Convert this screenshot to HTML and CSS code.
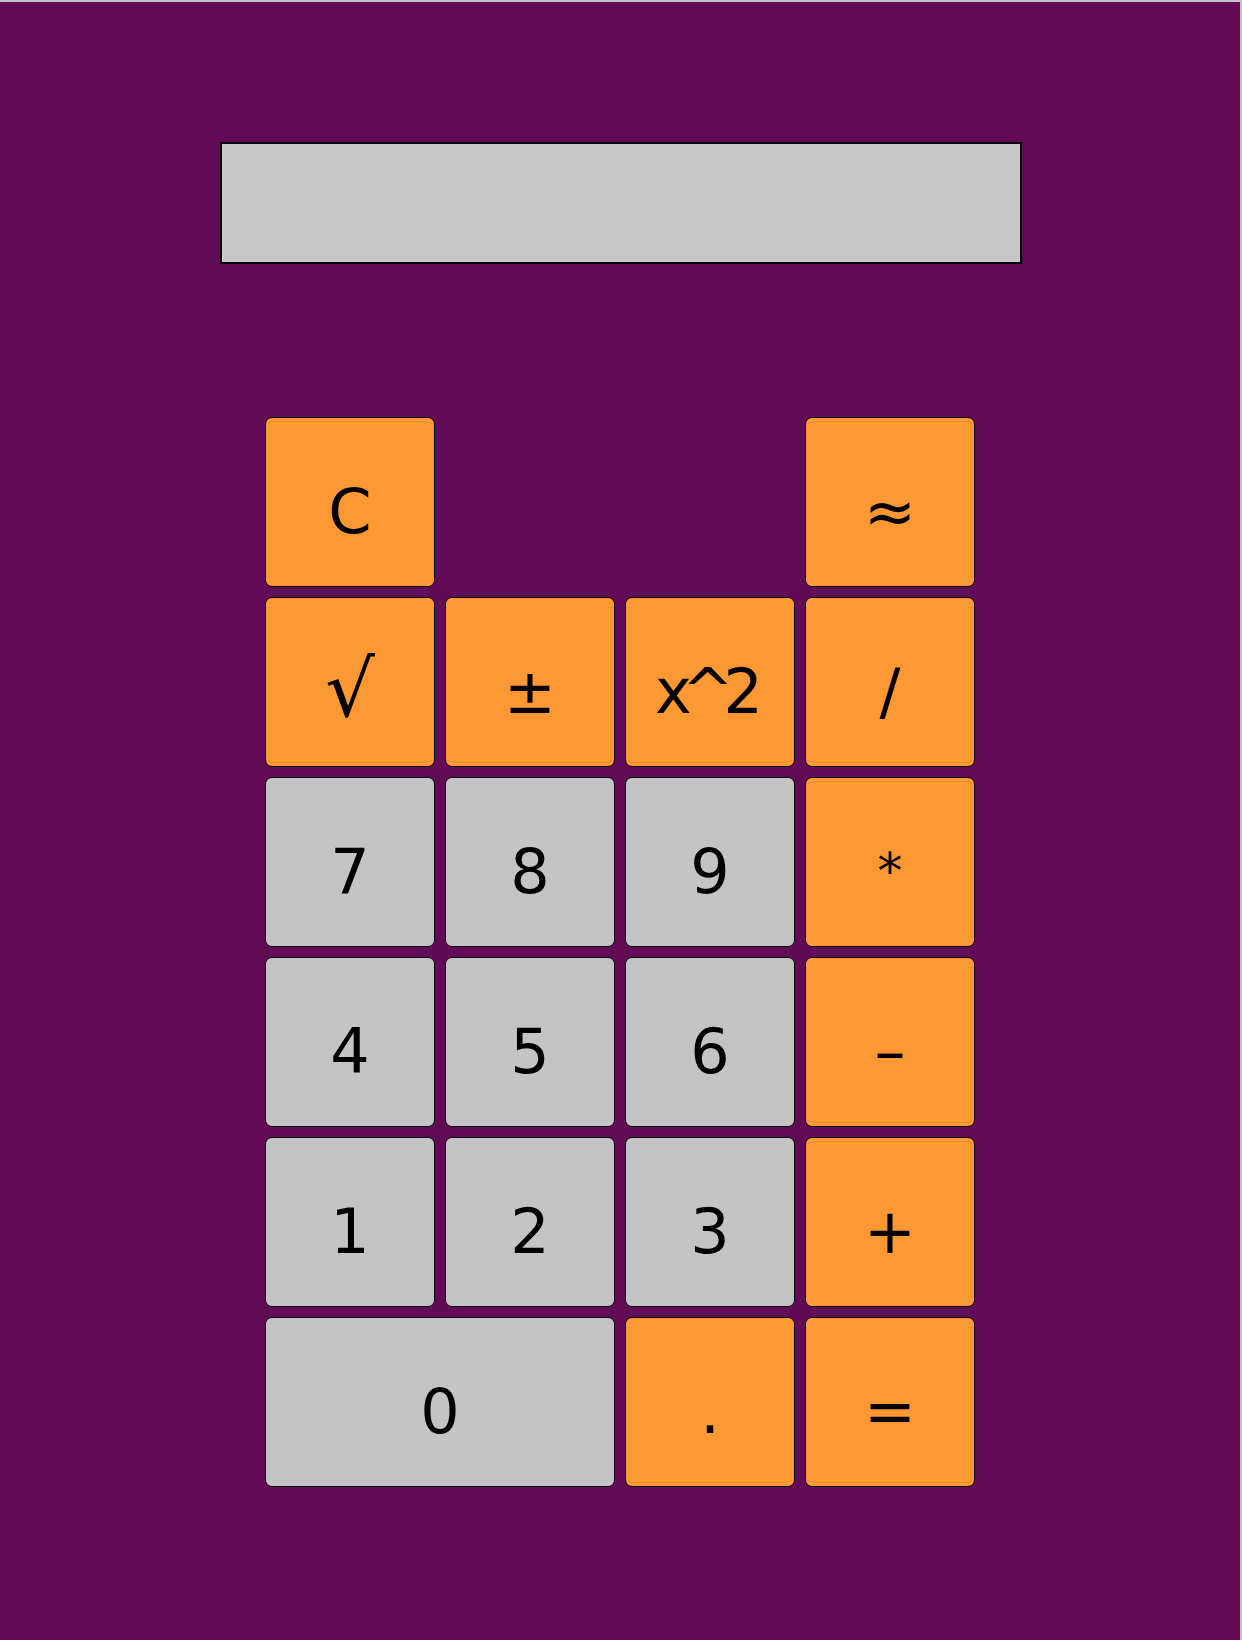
FILE: index.html
```html
<!DOCTYPE html>
<html lang="en">
<head>
<meta charset="utf-8">
<title>Calculator</title>
<link rel="stylesheet" href="styles.css">
</head>
<body>
<main class="calc">
  <div class="display"></div>
  <div class="keys">
    <button class="key op">C</button>
    <button class="key op col4">≈</button>
    <button class="key op"><span class="big">√</span></button>
    <button class="key op">±</button>
    <button class="key op tight">x^2</button>
    <button class="key op">/</button>
    <button class="key num">7</button>
    <button class="key num">8</button>
    <button class="key num">9</button>
    <button class="key op"><span class="small">*</span></button>
    <button class="key num">4</button>
    <button class="key num">5</button>
    <button class="key num">6</button>
    <button class="key op">–</button>
    <button class="key num">1</button>
    <button class="key num">2</button>
    <button class="key num">3</button>
    <button class="key op">+</button>
    <button class="key num wide">0</button>
    <button class="key op">.</button>
    <button class="key op">=</button>
  </div>
</main>
</body>
</html>
```
FILE: styles.css
```css
html, body {
  margin: 0;
  padding: 0;
}

body {
  width: 1242px;
  height: 1640px;
  box-sizing: border-box;
  background: #610b56;
  border-top: 2px solid #c4c4c4;
  border-right: 2px solid #c4c4c4;
  font-family: "DejaVu Sans", Verdana, sans-serif;
  overflow: hidden;
}

.calc {
  display: flex;
  flex-direction: column;
  align-items: center;
  padding-top: 140px;
}

.display {
  box-sizing: border-box;
  width: 802px;
  height: 122px;
  margin-left: 2px;
  background: #c7c7c7;
  border: 2px solid #000;
}

.keys {
  margin-top: 153px;
  display: grid;
  grid-template-columns: repeat(4, 170px);
  grid-auto-rows: 170px;
  gap: 10px;
}

.key {
  box-sizing: border-box;
  display: flex;
  align-items: center;
  justify-content: center;
  padding: 18px 0 0 0;
  margin: 0;
  border: 1px solid #0a0306;
  border-radius: 7px;
  font-family: "DejaVu Sans", Verdana, sans-serif;
  font-size: 62px;
  line-height: normal;
  color: #000;
  cursor: pointer;
}

.op {
  background: #fe9833;
}

.num {
  background: #c4c4c4;
}

.col4 {
  grid-column: 4;
}

.wide {
  grid-column: span 2;
}

.tight {
  letter-spacing: -10px;
  padding-right: 12px;
}

.big {
  font-size: 78px;
  margin-top: -4px;
}

.small {
  font-size: 50px;
}
```
